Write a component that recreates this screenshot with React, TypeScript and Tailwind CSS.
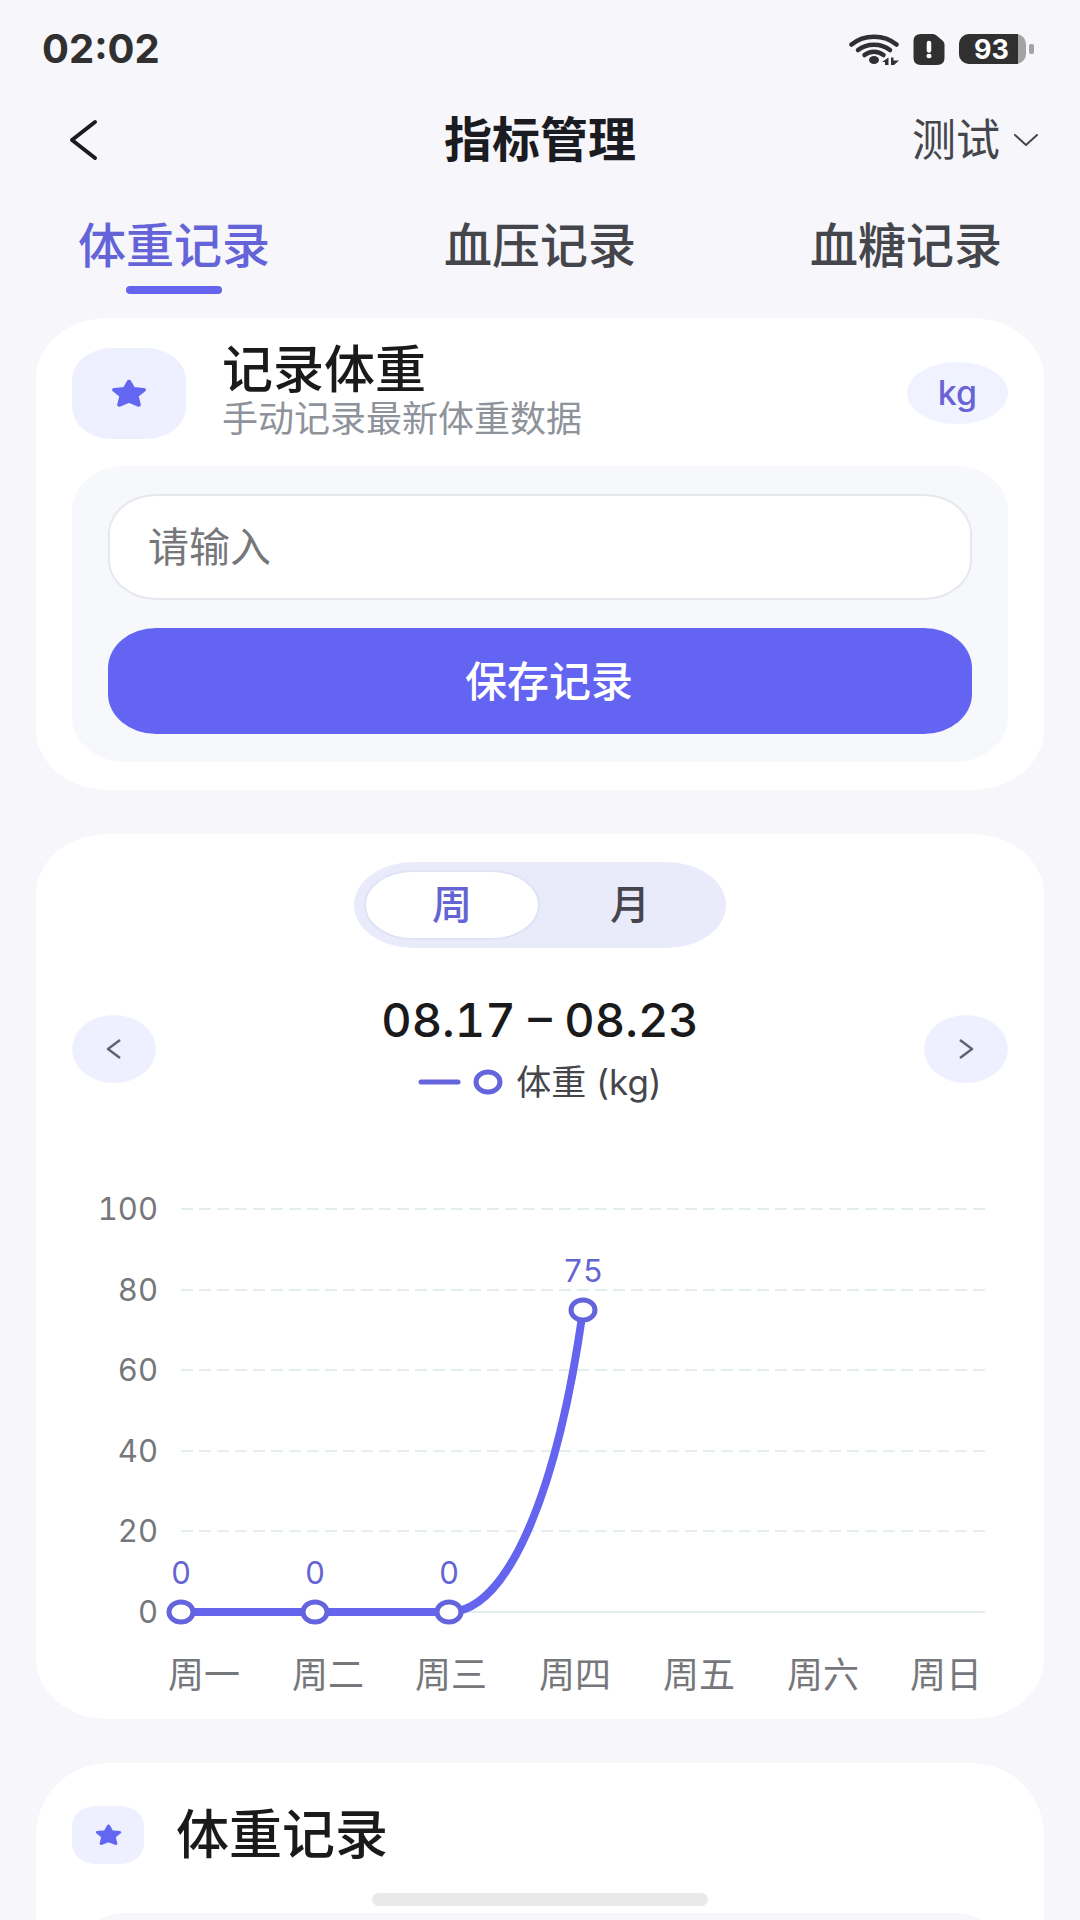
import React, { useState } from 'react';

const tabs = ['体重记录', '血压记录', '血糖记录'];
const ranges = ['周', '月'];
const days = ['周一', '周二', '周三', '周四', '周五', '周六', '周日'];
const weights = [0, 0, 0, 75];

const ticks = [100, 80, 60, 40, 20, 0];

const chart = { left: 109, right: 913, top: 28, bottom: 431 };
const stepX = (chart.right - chart.left) / 6;

const pointX = (index: number) => Math.round(chart.left + index * stepX);
const pointY = (value: number) =>
  Math.round(chart.bottom - (value / 100) * (chart.bottom - chart.top));

// flat runs stay straight, a change of value eases out of the previous point
const linePath = weights
  .map((value, i) => {
    const x = pointX(i);
    const y = pointY(value);
    if (i === 0) return `M${x} ${y}`;
    const prevX = pointX(i - 1);
    const prevY = pointY(weights[i - 1]);
    return `C${prevX + stepX * 0.42} ${prevY} ${x - stepX * 0.2} ${y + (prevY - y) * 0.63} ${x} ${y}`;
  })
  .join(' ');

const StarIcon = ({ className }: { className: string }) => (
  <svg viewBox="0 0 24 24" preserveAspectRatio="none" className={className} aria-hidden="true">
    <path
      d="M12 2.2 14.8 8.2 21.8 9 16.9 13.9 18.4 21.4 12 18.2 5.6 21.4 7.1 13.9 2.2 9 9.2 8.2Z"
      fill="currentColor"
      stroke="currentColor"
      strokeWidth="3"
      strokeLinejoin="round"
    />
  </svg>
);

const StatusBar = () => (
  <div className="flex h-[98px] shrink-0 items-center justify-between pl-[42px] pr-[46px] text-[#303030]">
    <span className="text-[40px] font-bold leading-none">02:02</span>
    <div className="flex items-center gap-[14px]">
      <svg width="50" height="32" viewBox="0 0 50 32" aria-hidden="true">
        <g fill="none" stroke="currentColor" strokeWidth="4.5" strokeLinecap="round">
          <path d="M2.500 11.500C15 1 35 1 47.500 11.500" />
          <path d="M9 17C18 10 32 10 41 17" />
          <path d="M15.500 22C21 17.500 29 17.500 34.500 22" />
        </g>
        <ellipse cx="25" cy="27" rx="5" ry="4" fill="currentColor" />
        <path d="M39.500 24.500V32H36V29H33ZM42 24.500H44.500V27.500H50L45 32H42Z" fill="currentColor" />
      </svg>
      <svg width="32" height="31" viewBox="0 0 32 31" aria-hidden="true">
        <path
          d="M8 0H20Q22 0 23.500 1.500L30 7Q31.500 8.500 31.500 10.500V24Q31.500 31 24 31H8Q.5 31 .5 24V7Q.5 0 8 0Z"
          fill="currentColor"
        />
        <path d="M16 9V16.500" stroke="white" strokeWidth="4.500" strokeLinecap="round" />
        <ellipse cx="16" cy="22" rx="2.600" ry="2.200" fill="white" />
      </svg>
      <div className="flex items-center gap-[3px]">
        <div className="flex h-[30px] w-[67px] items-center rounded-[10px] bg-[#a3a3a3]">
          <span className="flex h-[30px] w-[59px] items-center justify-center rounded-l-[10px] bg-[#303030] pl-[6px] text-[27px] font-bold leading-none text-white">
            93
          </span>
        </div>
        <span className="h-[10px] w-[5px] rounded-[2px] bg-[#a3a3a3]" />
      </div>
    </div>
  </div>
);

const Header = () => (
  <header className="grid h-[84px] shrink-0 grid-cols-[1fr_auto_1fr] items-center px-[42px]">
    <button type="button" aria-label="返回" className="ml-[26px] justify-self-start text-[#1b1b22]">
      <svg width="32" height="42" viewBox="0 0 32 42" fill="none" aria-hidden="true">
        <path d="M27 3 4 21 27 39" stroke="currentColor" strokeWidth="4" strokeLinecap="round" strokeLinejoin="round" />
      </svg>
    </button>
    <h1 className="text-[48px] font-bold leading-[60px] text-[#1b1b22]">指标管理</h1>
    <label className="flex items-center gap-[14px] justify-self-end text-[#45464c]">
      <select aria-label="成员" className="appearance-none bg-transparent text-[44px] leading-[60px] outline-none">
        <option>测试</option>
      </select>
      <svg width="24" height="14" viewBox="0 0 24 14" fill="none" aria-hidden="true">
        <path d="M1 2 12 12 23 2" stroke="currentColor" strokeWidth="2" strokeLinecap="round" strokeLinejoin="round" />
      </svg>
    </label>
  </header>
);

const RecordCard = () => (
  <section className="shrink-0 rounded-[72px/60px] bg-white px-9 pb-7 pt-[26px]">
    <div className="flex items-center">
      <div className="flex h-[91px] w-[114px] items-center justify-center rounded-[40px/32px] bg-[#eef0ff] text-[#6366f1]">
        <StarIcon className="h-[29px] w-[36px]" />
      </div>
      <div className="ml-9 flex-1">
        <h2 className="text-[51px] font-medium leading-[52px] text-[#1a1a1c]">记录体重</h2>
        <p className="text-[36px] leading-[46px] text-[#8e929b]">手动记录最新体重数据</p>
      </div>
      <span className="flex h-[62px] w-[101px] items-center justify-center rounded-[50%] bg-[#f0f3ff] text-[34px] font-medium leading-none text-[#6a63d6]">
        kg
      </span>
    </div>

    <form
      className="mt-6 flex flex-col gap-7 rounded-[54px/44px] bg-[#f6f8fc] px-9 py-7"
      onSubmit={(e) => e.preventDefault()}
    >
      <input
        type="text"
        aria-label="体重"
        placeholder="请输入"
        className="h-[106px] w-full rounded-[48px/40px] border-2 border-[#e6e8ee] bg-white px-[38px] text-[41px] text-[#45464c] outline-none placeholder:text-[#75777b]"
      />
      <button
        type="submit"
        className="h-[106px] w-full rounded-[48px/40px] bg-[#6464f2] pl-[18px] text-[42px] font-medium text-white"
      >
        保存记录
      </button>
    </form>
  </section>
);

const WeightChart = () => (
  <svg viewBox="0 0 936 520" className="block w-full tabular-nums" role="img" aria-label="体重 (kg)">
    {ticks.map((tick) => (
      <g key={tick}>
        <text x="86" y={pointY(tick) + 11} textAnchor="end" fontSize="31" fill="#75777b">
          {tick}
        </text>
        <line
          x1={chart.left}
          x2={chart.right}
          y1={pointY(tick)}
          y2={pointY(tick)}
          stroke="#e4edef"
          strokeWidth="2"
          strokeDasharray={tick === 0 ? undefined : '12 6'}
        />
      </g>
    ))}
    <path d={linePath} fill="none" stroke="#6464ee" strokeWidth="8" />
    {weights.map((value, i) => (
      <g key={i}>
        <ellipse cx={pointX(i)} cy={pointY(value)} rx="12" ry="10" fill="white" stroke="#6464dc" strokeWidth="5" />
        <text x={pointX(i)} y={pointY(value) - 28} textAnchor="middle" fontSize="31" fill="#6464d2">
          {value}
        </text>
      </g>
    ))}
    {days.map((day, i) => (
      <text key={day} x={132 + Math.round(i * 123.7)} y="507" textAnchor="middle" fontSize="36" fill="#75777b">
        {day}
      </text>
    ))}
  </svg>
);

const navButton =
  'flex h-[68px] w-[84px] items-center justify-center rounded-[50%] bg-[#eef0ff] text-[#62636e]';

const TrendCard = () => {
  const [range, setRange] = useState(ranges[0]);

  return (
    <section className="shrink-0 rounded-[72px/60px] bg-white px-9 pb-[18px] pt-7">
      <div className="mx-auto flex h-[86px] w-[372px] items-center gap-1 rounded-[60px/43px] bg-[#e9ebfb] px-[10px]">
        {ranges.map((item) => (
          <button
            key={item}
            type="button"
            aria-pressed={item === range}
            onClick={() => setRange(item)}
            className={`h-[70px] flex-1 rounded-[48px/35px] text-[40px] font-medium leading-none ${
              item === range
                ? 'border-2 border-[#e0e3f6] bg-white text-[#6464d2]'
                : 'text-[#45464c]'
            }`}
          >
            {item}
          </button>
        ))}
      </div>

      <div className="mt-11 flex items-center justify-between">
        <button type="button" aria-label="上一周" className={navButton}>
          <svg width="16" height="22" viewBox="0 0 16 22" fill="none" aria-hidden="true">
            <path d="M14 2 2 11 14 20" stroke="currentColor" strokeWidth="2.500" strokeLinejoin="round" />
          </svg>
        </button>
        <div className="flex flex-col items-center">
          <p className="text-[47px] font-medium leading-[56px] tabular-nums text-[#1a1a1c]">08.17 – 08.23</p>
          <div className="mt-[10px] flex items-center leading-[48px] text-[#45464c]">
            <svg width="86" height="28" viewBox="0 0 86 28" aria-hidden="true">
              <path d="M3 14H40" stroke="#6464dc" strokeWidth="5" strokeLinecap="round" />
              <ellipse cx="70" cy="14" rx="12" ry="10" fill="white" stroke="#6464dc" strokeWidth="5" />
            </svg>
            <span className="ml-3 text-[35px]">体重 (kg)</span>
          </div>
        </div>
        <button type="button" aria-label="下一周" className={navButton}>
          <svg width="16" height="22" viewBox="0 0 16 22" fill="none" aria-hidden="true">
            <path d="M2 2 14 11 2 20" stroke="currentColor" strokeWidth="2.500" strokeLinejoin="round" />
          </svg>
        </button>
      </div>

      <div className="mt-[75px]">
        <WeightChart />
      </div>
    </section>
  );
};

const HistoryCard = () => (
  <section className="flex min-h-0 flex-1 flex-col rounded-t-[72px] bg-white px-9 pt-9">
    <div className="flex items-center gap-8">
      <div className="flex h-[58px] w-[72px] items-center justify-center rounded-[24px/20px] bg-[#eef0ff] text-[#6366f1]">
        <StarIcon className="h-[22px] w-[27px]" />
      </div>
      <h2 className="text-[53px] font-medium leading-[72px] text-[#1a1a1c]">体重记录</h2>
    </div>
    <div className="mt-[42px] min-h-20 rounded-t-[54px] bg-[#f6f6fb]" />
  </section>
);

const App = () => {
  const [activeTab, setActiveTab] = useState(tabs[0]);

  return (
    <div className="flex h-screen flex-col overflow-hidden bg-[#f6f6fb] font-[Inter,'Noto_Sans_CJK_SC',sans-serif]">
      <StatusBar />
      <Header />

      <nav className="flex shrink-0 justify-between px-[78px] pt-[34px]">
        {tabs.map((tab) => (
          <button
            key={tab}
            type="button"
            onClick={() => setActiveTab(tab)}
            className={`flex flex-col items-center gap-[10px] text-[48px] font-medium leading-[60px] ${
              tab === activeTab ? 'text-[#6464d8]' : 'text-[#45464c]'
            }`}
          >
            {tab}
            <span className={`h-2 w-24 rounded-full ${tab === activeTab ? 'bg-[#6464ee]' : 'bg-transparent'}`} />
          </button>
        ))}
      </nav>

      <main className="mt-6 flex min-h-0 flex-1 flex-col gap-11 px-9">
        <RecordCard />
        <TrendCard />
        <HistoryCard />
      </main>

      <div className="fixed inset-x-0 bottom-[14px] mx-auto h-[13px] w-[336px] rounded-full bg-[#e9e9e9]" />
    </div>
  );
};

export default App;
